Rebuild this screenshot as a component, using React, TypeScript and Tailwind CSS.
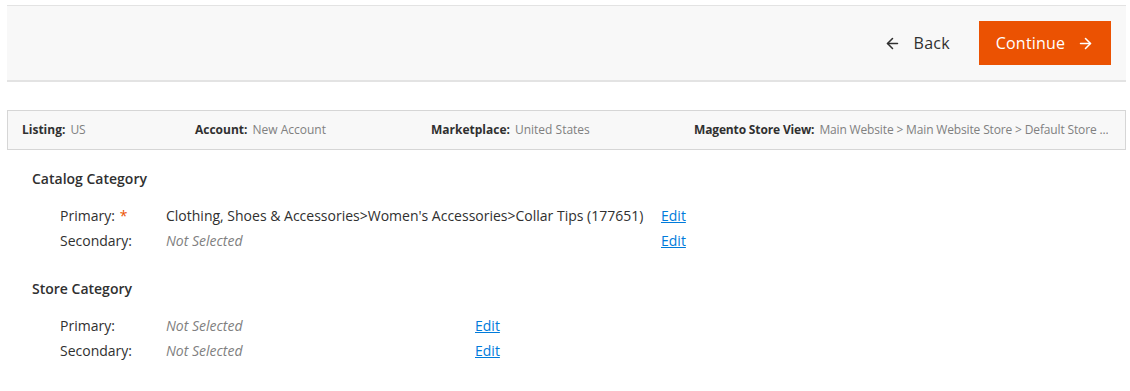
import { ArrowLeft, ArrowRight } from 'lucide-react'

const font = { fontFamily: '"Open Sans", "Noto Sans", sans-serif' }

type Row = { label: string; value: string | null; required?: boolean }

function CategoryBlock({ title, rows, valueWidth }: { title: string; rows: Row[]; valueWidth: string }) {
  return (
    <div>
      <h3 className="pl-[32px] text-[14px] font-semibold text-[#303030] leading-[20px]">{title}</h3>
      <div className="mt-[14px] pl-[60px]">
        {rows.map((r) => (
          <div key={r.label} className="flex items-center h-[25px] text-[14px] text-[#303030]">
            <div className="w-[106px] shrink-0">
              {r.label}
              {r.required && <span className="text-[#eb5202] ml-[5px]">*</span>}
            </div>
            <div className={valueWidth}>
              {r.value ? r.value : <span className="italic text-[#808080]">Not Selected</span>}
            </div>
            <a href="#" className="text-[#007bdb] underline">Edit</a>
          </div>
        ))}
      </div>
    </div>
  )
}

export default function App() {
  return (
    <div className="bg-white w-[1130px] h-[391px] pt-[5px]" style={font}>
      {/* Page actions bar */}
      <div className="mx-[7px] mr-[4px] h-[77px] bg-[#f8f8f8] border-t border-t-[#e3e3e3] border-b-2 border-b-[#e3e3e3] flex items-center justify-end pr-[15px]">
        <button className="flex items-center gap-[13px] text-[16px] text-[#303030] mr-[29px]">
          <ArrowLeft size={17} strokeWidth={2.2} />
          <span className="tracking-[0.3px]">Back</span>
        </button>
        <button className="flex items-center justify-center gap-[12px] h-[44px] w-[132px] bg-[#eb5202] text-white text-[16px] border border-[#eb5202]">
          <span className="tracking-[0.2px]">Continue</span>
          <ArrowRight size={17} strokeWidth={2.2} />
        </button>
      </div>

      {/* Listing info */}
      <div className="mt-[28px] mx-[7px] mr-[4px] h-[40px] bg-[#f8f8f8] border border-[#d6d6d6] flex items-center text-[12px] whitespace-nowrap">
        <div className="w-[187px] pl-[14px] shrink-0">
          <span className="font-bold text-[#303030]">Listing:</span>
          <span className="text-[#808080] ml-[5px]">US</span>
        </div>
        <div className="w-[236px] shrink-0">
          <span className="font-bold text-[#303030]">Account:</span>
          <span className="text-[#808080] ml-[5px]">New Account</span>
        </div>
        <div className="w-[263px] shrink-0">
          <span className="font-bold text-[#303030]">Marketplace:</span>
          <span className="text-[#808080] ml-[5px]">United States</span>
        </div>
        <div className="overflow-hidden tracking-[-0.15px]">
          <span className="font-bold text-[#303030]">Magento Store View:</span>
          <span className="text-[#808080] ml-[5px]">Main Website &gt; Main Website Store &gt; Default Store ...</span>
        </div>
      </div>

      <div className="mt-[19px]">
        <CategoryBlock
          title="Catalog Category"
          valueWidth="w-[495px] shrink-0"
          rows={[
            { label: 'Primary:', value: "Clothing, Shoes & Accessories>Women's Accessories>Collar Tips (177651)", required: true },
            { label: 'Secondary:', value: null },
          ]}
        />
      </div>
      <div className="mt-[26px]">
        <CategoryBlock
          title="Store Category"
          valueWidth="w-[309px] shrink-0"
          rows={[
            { label: 'Primary:', value: null },
            { label: 'Secondary:', value: null },
          ]}
        />
      </div>
    </div>
  )
}
